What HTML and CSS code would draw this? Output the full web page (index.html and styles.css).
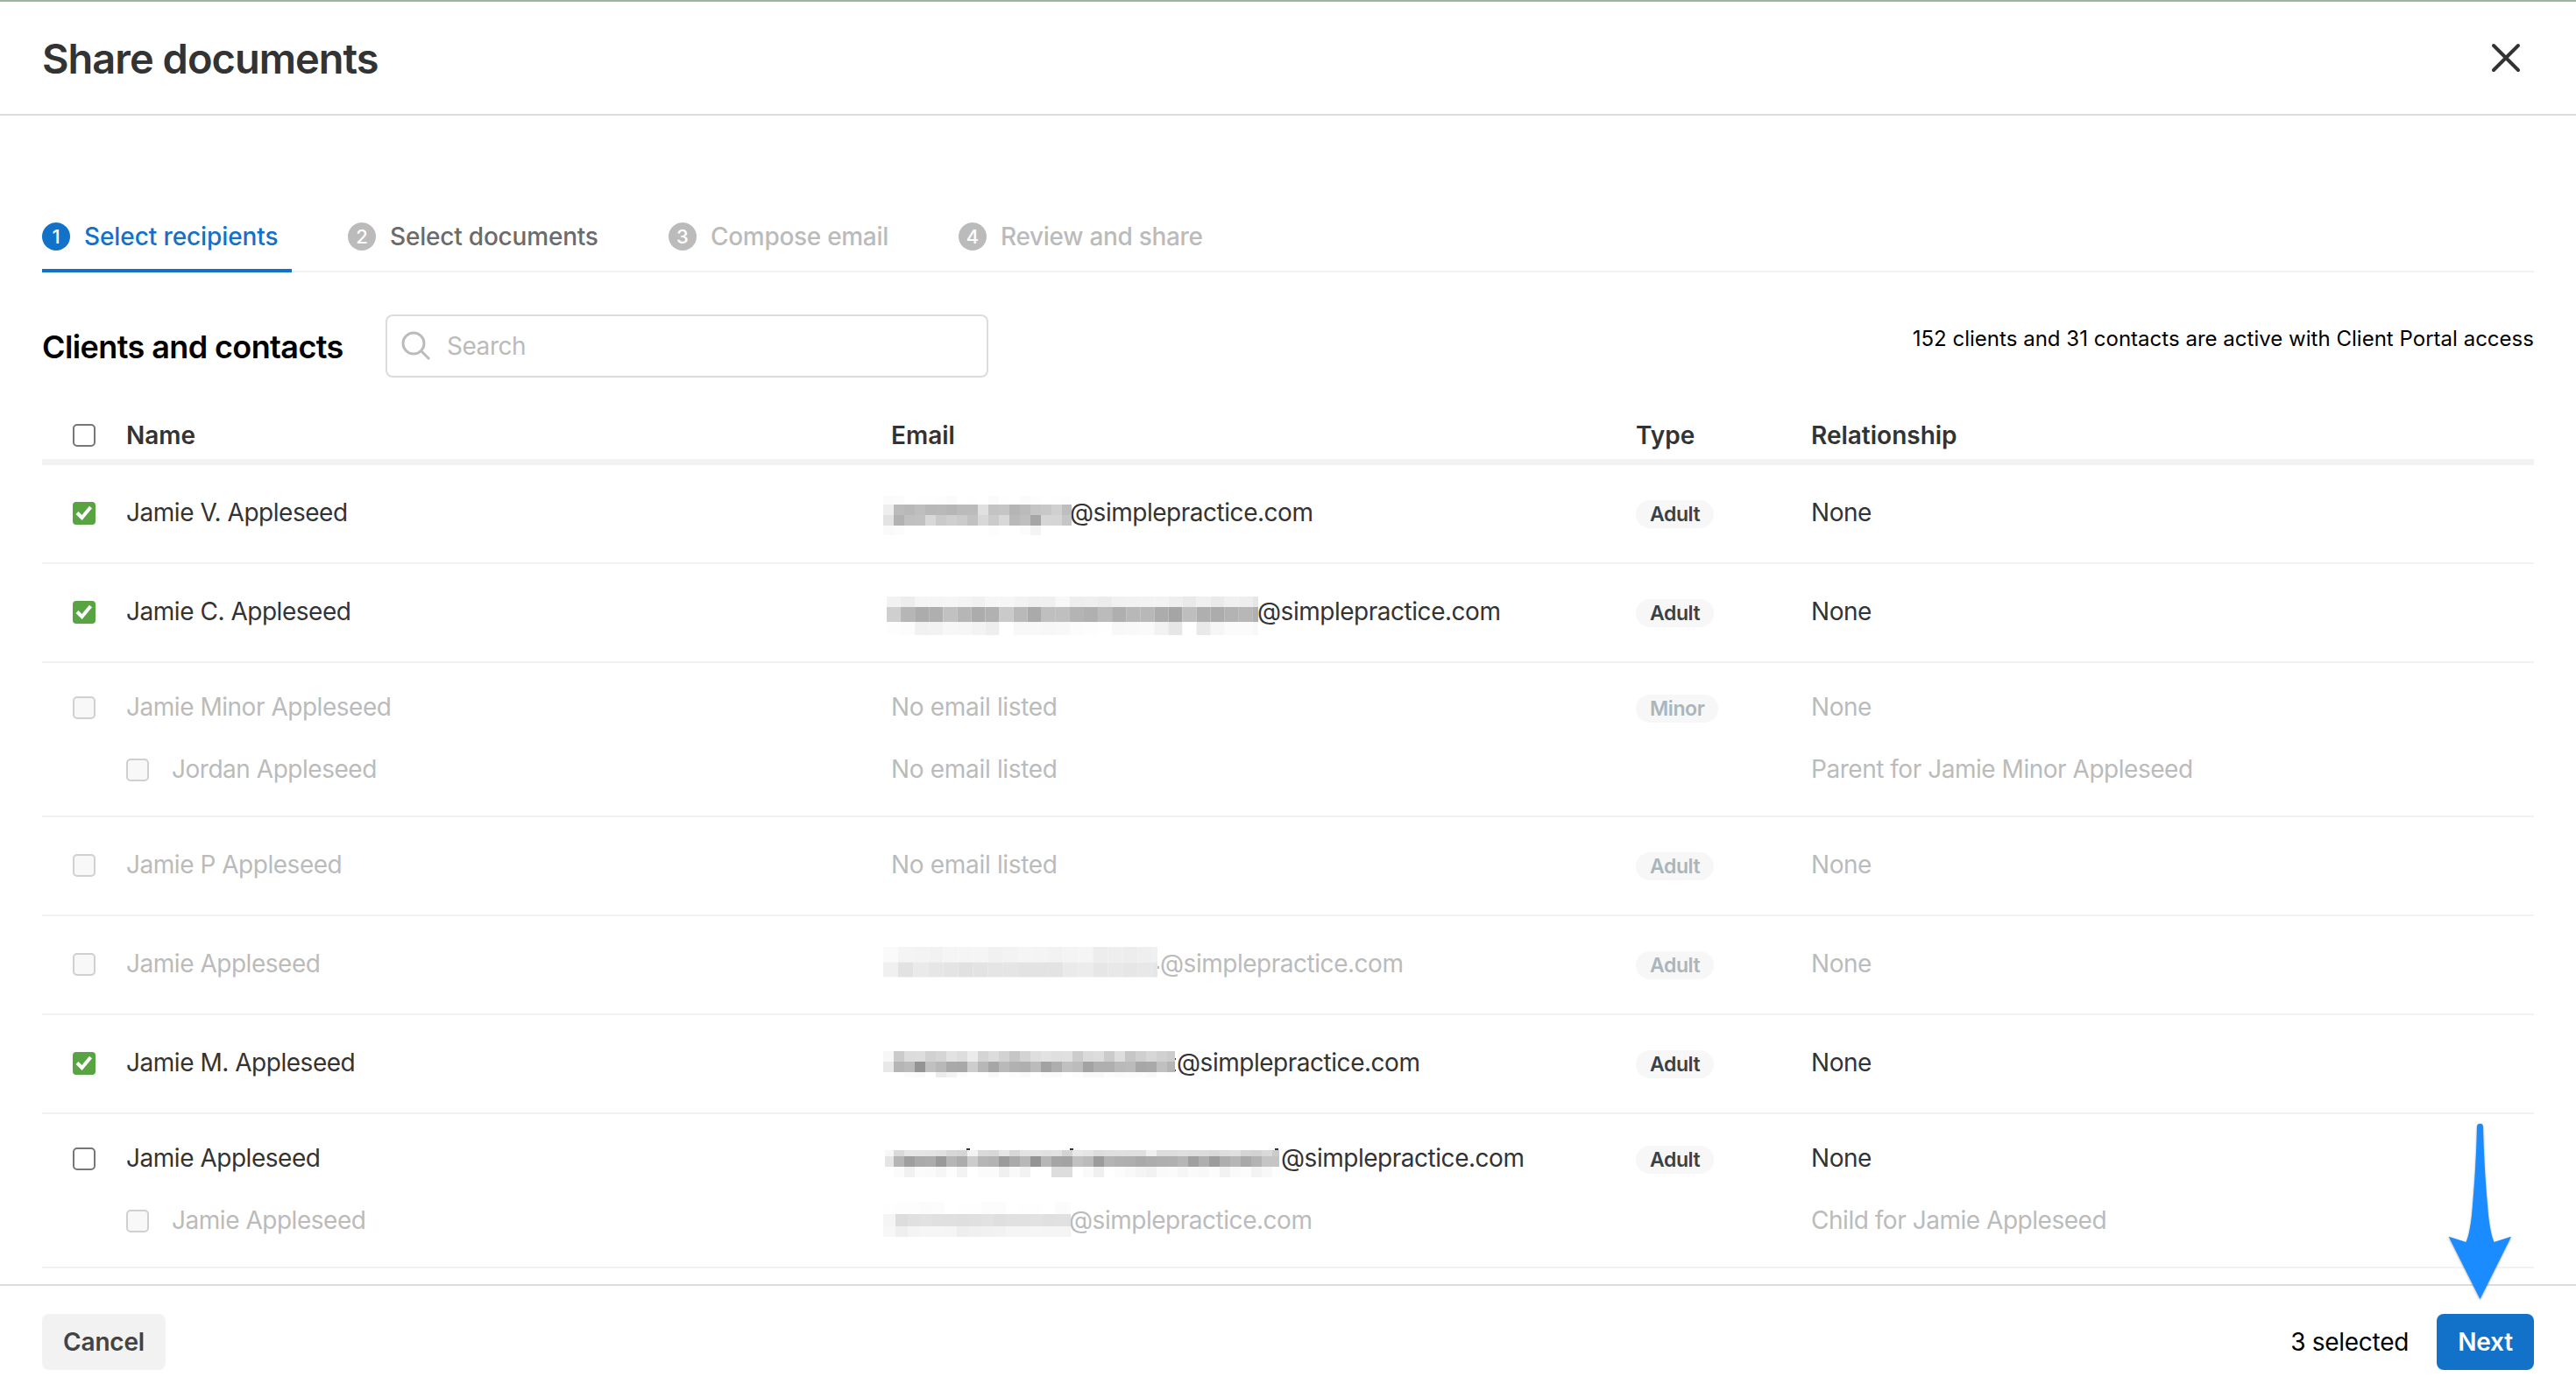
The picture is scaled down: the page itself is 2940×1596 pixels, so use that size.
FILE: index.html
```
<!DOCTYPE html>
<html lang="en">
<head>
    <meta charset="UTF-8">
    <meta name="viewport" content="width=device-width, initial-scale=1.0">
    <title>Share documents</title>
    <link rel="stylesheet" href="styles.css">
</head>
<body>
    <header class="header">
        <h1>Share documents</h1>
        <svg class="close" viewBox="0 0 34 34"><path d="M3 3L31 31M31 3L3 31"/></svg>
    </header>

    <main class="content">
        <nav class="tabs">
            <div class="tab active"><span class="step">1</span><span class="t1">Select recipients</span></div>
            <div class="tab next-tab"><span class="step">2</span><span class="t2">Select documents</span></div>
            <div class="tab"><span class="step">3</span><span class="t3">Compose email</span></div>
            <div class="tab"><span class="step">4</span><span class="t4">Review and share</span></div>
        </nav>

        <div class="toolbar">
            <h2>Clients and contacts</h2>
            <div class="search">
                <svg viewBox="0 0 34 34"><circle cx="14" cy="14" r="12"/><path d="M23 23L32 32"/></svg>
                <span>Search</span>
            </div>
            <p class="summary">152 clients and 31 contacts are active with Client Portal access</p>
        </div>

        <div class="table">
            <div class="line table-head">
                <span class="check"></span>
                <span>Name</span>
                <span>Email</span>
                <span>Type</span>
                <span>Relationship</span>
            </div>

            <div class="row">
                <div class="line">
                    <span class="check checked"><svg viewBox="0 0 26 26"><path d="M5 12.5L10.5 18L20.500 6"/></svg></span>
                    <span>Jamie V. Appleseed</span>
                    <span class="email"><svg class="mask" data-mask="jv"></svg>@simplepractice.com</span>
                    <span><b class="pill">Adult</b></span>
                    <span>None</span>
                </div>
            </div>

            <div class="row">
                <div class="line">
                    <span class="check checked"><svg viewBox="0 0 26 26"><path d="M5 12.5L10.5 18L20.500 6"/></svg></span>
                    <span>Jamie C. Appleseed</span>
                    <span class="email"><svg class="mask" data-mask="jc"></svg>@simplepractice.com</span>
                    <span><b class="pill">Adult</b></span>
                    <span>None</span>
                </div>
            </div>

            <div class="row double">
                <div class="line disabled">
                    <span class="check"></span>
                    <span>Jamie Minor Appleseed</span>
                    <span class="no-email">No email listed</span>
                    <span><b class="pill">Minor</b></span>
                    <span>None</span>
                </div>
                <div class="line disabled sub">
                    <span></span>
                    <span class="sub-name"><span class="check"></span>Jordan Appleseed</span>
                    <span class="no-email">No email listed</span>
                    <span></span>
                    <span>Parent for Jamie Minor Appleseed</span>
                </div>
            </div>

            <div class="row">
                <div class="line disabled">
                    <span class="check"></span>
                    <span>Jamie P Appleseed</span>
                    <span class="no-email">No email listed</span>
                    <span><b class="pill">Adult</b></span>
                    <span>None</span>
                </div>
            </div>

            <div class="row">
                <div class="line disabled">
                    <span class="check"></span>
                    <span>Jamie Appleseed</span>
                    <span class="email"><svg class="mask" data-mask="ja"></svg>@simplepractice.com</span>
                    <span><b class="pill">Adult</b></span>
                    <span>None</span>
                </div>
            </div>

            <div class="row">
                <div class="line">
                    <span class="check checked"><svg viewBox="0 0 26 26"><path d="M5 12.5L10.5 18L20.500 6"/></svg></span>
                    <span>Jamie M. Appleseed</span>
                    <span class="email"><svg class="mask" data-mask="jm"></svg>@simplepractice.com</span>
                    <span><b class="pill">Adult</b></span>
                    <span>None</span>
                </div>
            </div>

            <div class="row double">
                <div class="line">
                    <span class="check"></span>
                    <span>Jamie Appleseed</span>
                    <span class="email"><svg class="mask" data-mask="jp"></svg>@simplepractice.com</span>
                    <span><b class="pill">Adult</b></span>
                    <span>None</span>
                </div>
                <div class="line disabled sub">
                    <span></span>
                    <span class="sub-name"><span class="check"></span>Jamie Appleseed</span>
                    <span class="email"><svg class="mask" data-mask="jk"></svg>@simplepractice.com</span>
                    <span></span>
                    <span>Child for Jamie Appleseed</span>
                </div>
            </div>
        </div>
    </main>

    <footer class="footer">
        <button class="cancel">Cancel</button>
        <span class="selected">3 selected</span>
        <button class="next">Next</button>
    </footer>

    <svg class="arrow" viewBox="0 0 76 206">
        <path d="M34 6Q34.300 2.700 37.500 2.700Q40.700 2.700 41 6C41.500 30 43 62 46 96C47.500 116 50 130 53.500 138L73 131.700L37.500 203L1.700 131.700L21.500 138C25 130 27.500 116 29 96C32 62 33.500 30 34 6Z"/>
    </svg>

    <script>
        // Pixelated local parts of the addresses, one grey value per cell
        const masks = {
            jv: { width: 214, end: 215, cell: 12, top: 6, heights: [10, 12, 12, 11], rows: [
                "fb fc ff fe fe fd fb ff fe ff fb fe ff fb fd ff fe fd",
                "ee bb b8 be b8 b9 b6 bb bb e0 c3 c5 b5 bb c5 c8 d0 be",
                "e3 b2 c0 c1 d8 ca cf cb c1 d8 cb d8 b9 bf a6 d6 d5 c6",
                "fa fc ff ff ff ff ff ff ff ff fd ff ff fc f4 ff ff ff"] },
            jc: { width: 428, end: 428, start: 4, cell: 16.07, top: 8, heights: [12, 17, 15], rows: [
                "f2 ed f5 f5 f6 f4 f1 f6 f6 f3 f0 f0 f8 ee ef ec f1 f2 f3 f3 ee e9 f0 ea f0 ee e6",
                "cf b6 ac af c1 b6 ac b1 ca b9 aa bf bf b4 b0 bb af b8 b8 ac a5 be af ac b3 b7 b0",
                "fd fc f1 f2 f7 f6 f3 ee ff f8 f8 f7 f8 fc fd fe f8 f9 fa f2 e6 ff e9 f6 fb fb f8"] },
            ja: { width: 317, end: 313, cell: 17.1, top: 6, heights: [17.5, 17], specks: [[313, 28, 2, 3, "#bbb"]], rows: [
                "fa f4 f3 f2 f5 f5 f5 f1 f3 f5 f4 f2 f4 f5 ed ee ed ef f0",
                "f0 e2 ea e6 e4 e1 e3 e5 e5 e3 e3 e3 ea ec e6 e8 e6 e8 e6"] },
            jm: { width: 336, end: 333, cell: 12, top: 12, heights: [12, 12, 6], specks: [[333, 20, 1, 2, "#444"], [333, 33, 1, 2, "#444"]], rows: [
                "f7 cb dc dd d1 d5 e2 dd eb d4 dc d2 c6 d3 de e2 df e0 cc da dd cb dd c6 cf d7 d0 cc",
                "e8 b5 ba 94 c0 b8 a9 a8 cd b7 a6 b9 b1 af bb a2 ae c0 bc a3 af af b9 bb a7 a9 c0 b5",
                "ff ff fc fa ff ec f3 fc ff ff f9 ff fd fa ff fb fa ff fd f9 f9 fd fa fb fc f9 ff fd"] },
            jp: { width: 455, end: 452, start: 12, cell: 12, top: 16, heights: [7, 12, 12],
                specks: [[2, 16, 10, 7, "#f7f7f7"], [2, 23, 10, 12, "#e5e5e5"], [95, 14, 4, 2, "#333"], [213, 14, 4, 2, "#333"], [447, 14, 4, 2, "#333"]], rows: [
                "da e6 e5 e4 e1 d8 d5 f3 da d8 e5 d8 e3 e3 e1 e2 d4 e8 e5 dd df e0 df df f0 dd dd df dd dc d9 de e0 d5 d3 d9 cb",
                "b5 9f aa ac 9a b6 ac cc b6 b3 9b aa b8 94 b7 a5 a3 c1 bb 9c b4 b0 af aa ad af b0 b6 a0 af 9d ae b6 a9 b3 c5 c5",
                "fb f1 fb fa f6 fd f3 ff fb fb f0 f9 f2 ff ff dd dd ff fa f0 ff fc f9 f5 f2 fa fb f6 fa f8 fc f2 fa fc f3 f8 fe"] },
            jk: { width: 213, end: 214, cell: 14, top: 4, heights: [14, 14, 12], rows: [
                "fe fd fd fb fc ff fe fe fc fc ff fe fe ff fb fc",
                "f5 dd e0 e2 e0 e0 df e0 e2 df e1 e1 e2 e0 e1 e0",
                "f7 ef f4 f6 f6 f5 ee f0 f1 f2 f5 f5 f6 f5 f5 f4"] }
        };

        function addRect(svg, x, y, w, h, fill) {
            const rect = document.createElementNS("http://www.w3.org/2000/svg", "rect");
            rect.setAttribute("x", x);
            rect.setAttribute("y", y);
            rect.setAttribute("width", w);
            rect.setAttribute("height", h);
            rect.setAttribute("fill", fill);
            svg.appendChild(rect);
        }

        document.querySelectorAll(".mask").forEach(svg => {
            const mask = masks[svg.dataset.mask];
            svg.style.width = mask.width + "px";
            let y = mask.top;
            mask.rows.forEach((row, i) => {
                row.split(" ").forEach((v, j) => {
                    const x = (mask.start || 0) + j * mask.cell;
                    const w = Math.min(mask.cell, mask.end - x);
                    if (w > 0) addRect(svg, x, y, w, mask.heights[i], "#" + v + v + v);
                });
                y += mask.heights[i];
            });
            (mask.specks || []).forEach(s => addRect(svg, ...s));
        });
    </script>
</body>
</html>
```
FILE: styles.css
```
* {
    box-sizing: border-box;
}
body {
    margin: 0;
    height: 1596px;
    display: flex;
    flex-direction: column;
    background-color: #fff;
    border-top: 2px solid #9cb59c;
    color: #333;
    font-family: Inter, "Liberation Sans", sans-serif;
    font-size: 28px;
    letter-spacing: -0.47px;
    overflow: hidden;
}
h1, h2, p {
    margin: 0;
}
.header {
    height: 130px;
    padding: 0 63px 0 48px;
    display: flex;
    align-items: center;
    justify-content: space-between;
    border-bottom: 2px solid #dcdcdc;
}
h1 {
    font-size: 47px;
    font-weight: 600;
    letter-spacing: -1px;
}
.close {
    width: 34px;
    height: 34px;
    fill: none;
    stroke: #333;
    stroke-width: 4;
    stroke-linecap: round;
}
.content {
    flex: 1;
    padding: 98px 48px 0;
}
.tabs {
    display: flex;
    gap: 64px;
    height: 81px;
    border-bottom: 2px solid #f2f2f2;
}
.tab {
    height: 81px;
    display: flex;
    align-items: center;
    gap: 16px;
    padding: 0 16px 1px 0;
    color: #bbb;
    font-weight: 500;
    white-space: nowrap;
}
.active {
    color: #1271c9;
    border-bottom: 4px solid #1271c9;
    padding-top: 4px;
}
.t1 {
    width: 221px;
    letter-spacing: -0.1px;
}
.t2 {
    width: 238px;
    letter-spacing: -0.2px;
}
.t3 {
    width: 203px;
    letter-spacing: -0.3px;
}
.t4 {
    letter-spacing: -0.3px;
}
.step {
    width: 32px;
    height: 32px;
    border-radius: 50%;
    background-color: #bbb;
    color: #fff;
    font-size: 22px;
    letter-spacing: 0;
    line-height: 32px;
    text-align: center;
}
.active .step {
    background-color: #1271c9;
}
.next-tab {
    color: #6b6b6b;
}
.toolbar {
    display: flex;
    align-items: flex-start;
    margin-top: 48px;
    height: 72px;
}
h2 {
    width: 392px;
    color: #000;
    font-size: 36px;
    font-weight: 600;
    letter-spacing: -0.6px;
    line-height: 74px;
}
.search {
    width: 688px;
    height: 72px;
    display: flex;
    align-items: center;
    gap: 18px;
    padding-left: 16px;
    border: 2px solid #dcdcdc;
    border-radius: 8px;
    color: #bbb;
}
.search svg {
    width: 34px;
    height: 34px;
    fill: none;
    stroke: #bbb;
    stroke-width: 3;
}
.summary {
    margin-left: auto;
    color: #000;
    font-size: 24px;
    letter-spacing: 0.02px;
    line-height: 55px;
}
.line {
    display: grid;
    grid-template-columns: 96px 873px 850px 200px 1fr;
    align-items: center;
    height: 50px;
}
.table-head {
    height: 100px;
    padding-top: 38px;
    border-bottom: 7px solid #f2f2f2;
    font-weight: 600;
    letter-spacing: 0;
}
.row {
    height: 113px;
    padding-top: 29px;
    border-bottom: 2px solid #f2f2f2;
}
.double {
    height: 176px;
    padding-top: 25px;
}
.sub {
    margin-top: 21px;
}
.check {
    width: 26px;
    height: 26px;
    margin: 2px 0 0 35px;
    border: 2px solid #767676;
    border-radius: 5px;
}
.table-head .check {
    margin-top: 0;
}
.checked {
    border: none;
    border-radius: 4px;
    background-color: #58a443;
}
.checked svg {
    display: block;
    fill: none;
    stroke: #fff;
    stroke-width: 4;
}
.sub-name {
    display: flex;
    align-items: center;
}
.sub-name .check {
    margin: 2px 26px 0 0;
}
.disabled {
    color: #bbb;
}
.disabled .check {
    border-color: #d0d0d0;
    background-color: #f8f8f8;
}
.email {
    display: flex;
    align-items: center;
}
.no-email {
    letter-spacing: -0.32px;
}
.mask {
    position: relative;
    height: 50px;
    margin-left: -9px;
    margin-right: -1px;
    overflow: visible;
}
.pill {
    display: inline-block;
    height: 32px;
    margin-top: 3px;
    padding: 0 16px;
    border-radius: 16px;
    background-color: #f7f7f7;
    color: #37424a;
    font-size: 23px;
    font-weight: 600;
    letter-spacing: -0.4px;
    line-height: 32px;
    vertical-align: middle;
}
.disabled .pill {
    color: #a9b6bd;
}
.footer {
    height: 130px;
    display: flex;
    align-items: flex-start;
    padding: 32px 48px 0;
    border-top: 2px solid #dcdcdc;
    background-color: #fff;
    color: #000;
}
button {
    height: 64px;
    border: none;
    border-radius: 8px;
    padding: 0;
    font-family: inherit;
    font-size: 28px;
    font-weight: 600;
    letter-spacing: -0.2px;
}
.cancel {
    width: 141px;
    background-color: #f2f2f2;
    color: #434343;
}
.selected {
    margin-left: auto;
    margin-right: 32px;
    letter-spacing: -0.3px;
    line-height: 65px;
}
.next {
    width: 111px;
    background-color: #1271c9;
    color: #fff;
}
.arrow {
    position: absolute;
    left: 2793px;
    top: 1280px;
    width: 76px;
    height: 206px;
    fill: #1a8cff;
    filter: drop-shadow(0 1px 1px rgba(0, 0, 0, 0.4));
}
```
